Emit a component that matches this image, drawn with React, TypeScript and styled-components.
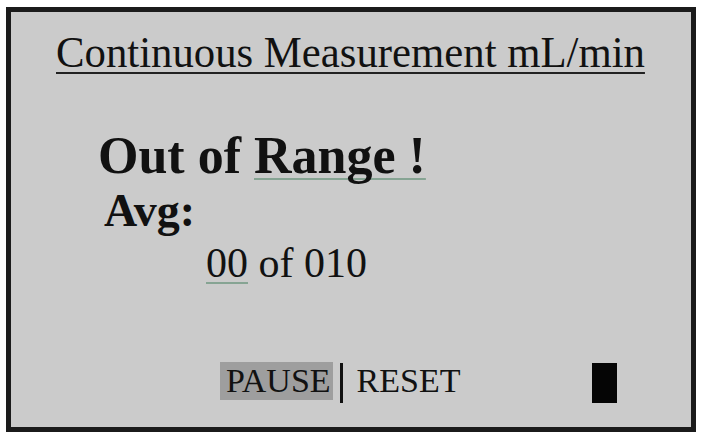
import React from 'react';
import styled, { createGlobalStyle } from 'styled-components';

const GlobalStyle = createGlobalStyle`
  html, body {
    margin: 0;
    padding: 0;
    background: #ffffff;
  }
  body {
    font-family: "Liberation Serif", "Times New Roman", serif;
    color: #111111;
  }
`;

const Screen = styled.div`
  box-sizing: border-box;
  margin: 7px 0 0 6px;
  width: 690px;
  height: 425px;
  border: 5px solid #1b1b1b;
  background: #cbcbcb;
  display: flex;
  flex-direction: column;
  padding: 18px 0 24px 0;
`;

const Title = styled.div`
  align-self: flex-start;
  margin-left: 45px;
  font-size: 45px;
  line-height: 45px;
  white-space: nowrap;
  transform: scaleX(0.95);
  transform-origin: left center;
  text-decoration: underline;
  text-decoration-thickness: 2px;
  text-underline-offset: 5px;
  text-decoration-color: #222;
`;

const Heading = styled.div<{ $size: number; $indent: number; $gap: number }>`
  margin-top: ${p => p.$gap}px;
  margin-left: ${p => p.$indent}px;
  font-size: ${p => p.$size}px;
  line-height: ${p => p.$size}px;
  font-weight: bold;
  white-space: nowrap;
`;

const Counter = styled.div`
  margin-top: 8px;
  margin-left: 195px;
  font-size: 42px;
  line-height: 42px;
  white-space: nowrap;
`;

const Squiggle = styled.span`
  text-decoration: underline;
  text-decoration-color: #86a493;
  text-decoration-thickness: 2px;
  text-underline-offset: 5px;
  text-decoration-skip-ink: none;
`;

const Footer = styled.div`
  margin-top: auto;
  margin-left: 209px;
  display: flex;
  align-items: flex-start;
  height: 41px;
`;

const SoftKey = styled.div<{ $active?: boolean }>`
  font-size: 34px;
  line-height: 38px;
  height: 38px;
  padding: ${p => (p.$active ? '0 2px 0 6px' : '0')};
  background: ${p => (p.$active ? '#9e9e9e' : 'transparent')};
  white-space: nowrap;
`;

const Divider = styled.div`
  width: 3px;
  height: 40px;
  margin: 1px 14px 0 7px;
  background: #111;
`;

const Cursor = styled.div`
  width: 25px;
  height: 40px;
  margin: 1px 0 0 132px;
  background: #050505;
`;

export default function App() {
  return (
    <>
      <GlobalStyle />
      <Screen>
        <Title>Continuous Measurement mL/min</Title>
        <Heading $size={52} $indent={87} $gap={55}>
          Out of <Squiggle>Range !</Squiggle>
        </Heading>
        <Heading $size={46} $indent={93} $gap={6}>Avg:</Heading>
        <Counter>
          <Squiggle>00</Squiggle> of 010
        </Counter>
        <Footer>
          <SoftKey $active>PAUSE</SoftKey>
          <Divider />
          <SoftKey>RESET</SoftKey>
          <Cursor />
        </Footer>
      </Screen>
    </>
  );
}
